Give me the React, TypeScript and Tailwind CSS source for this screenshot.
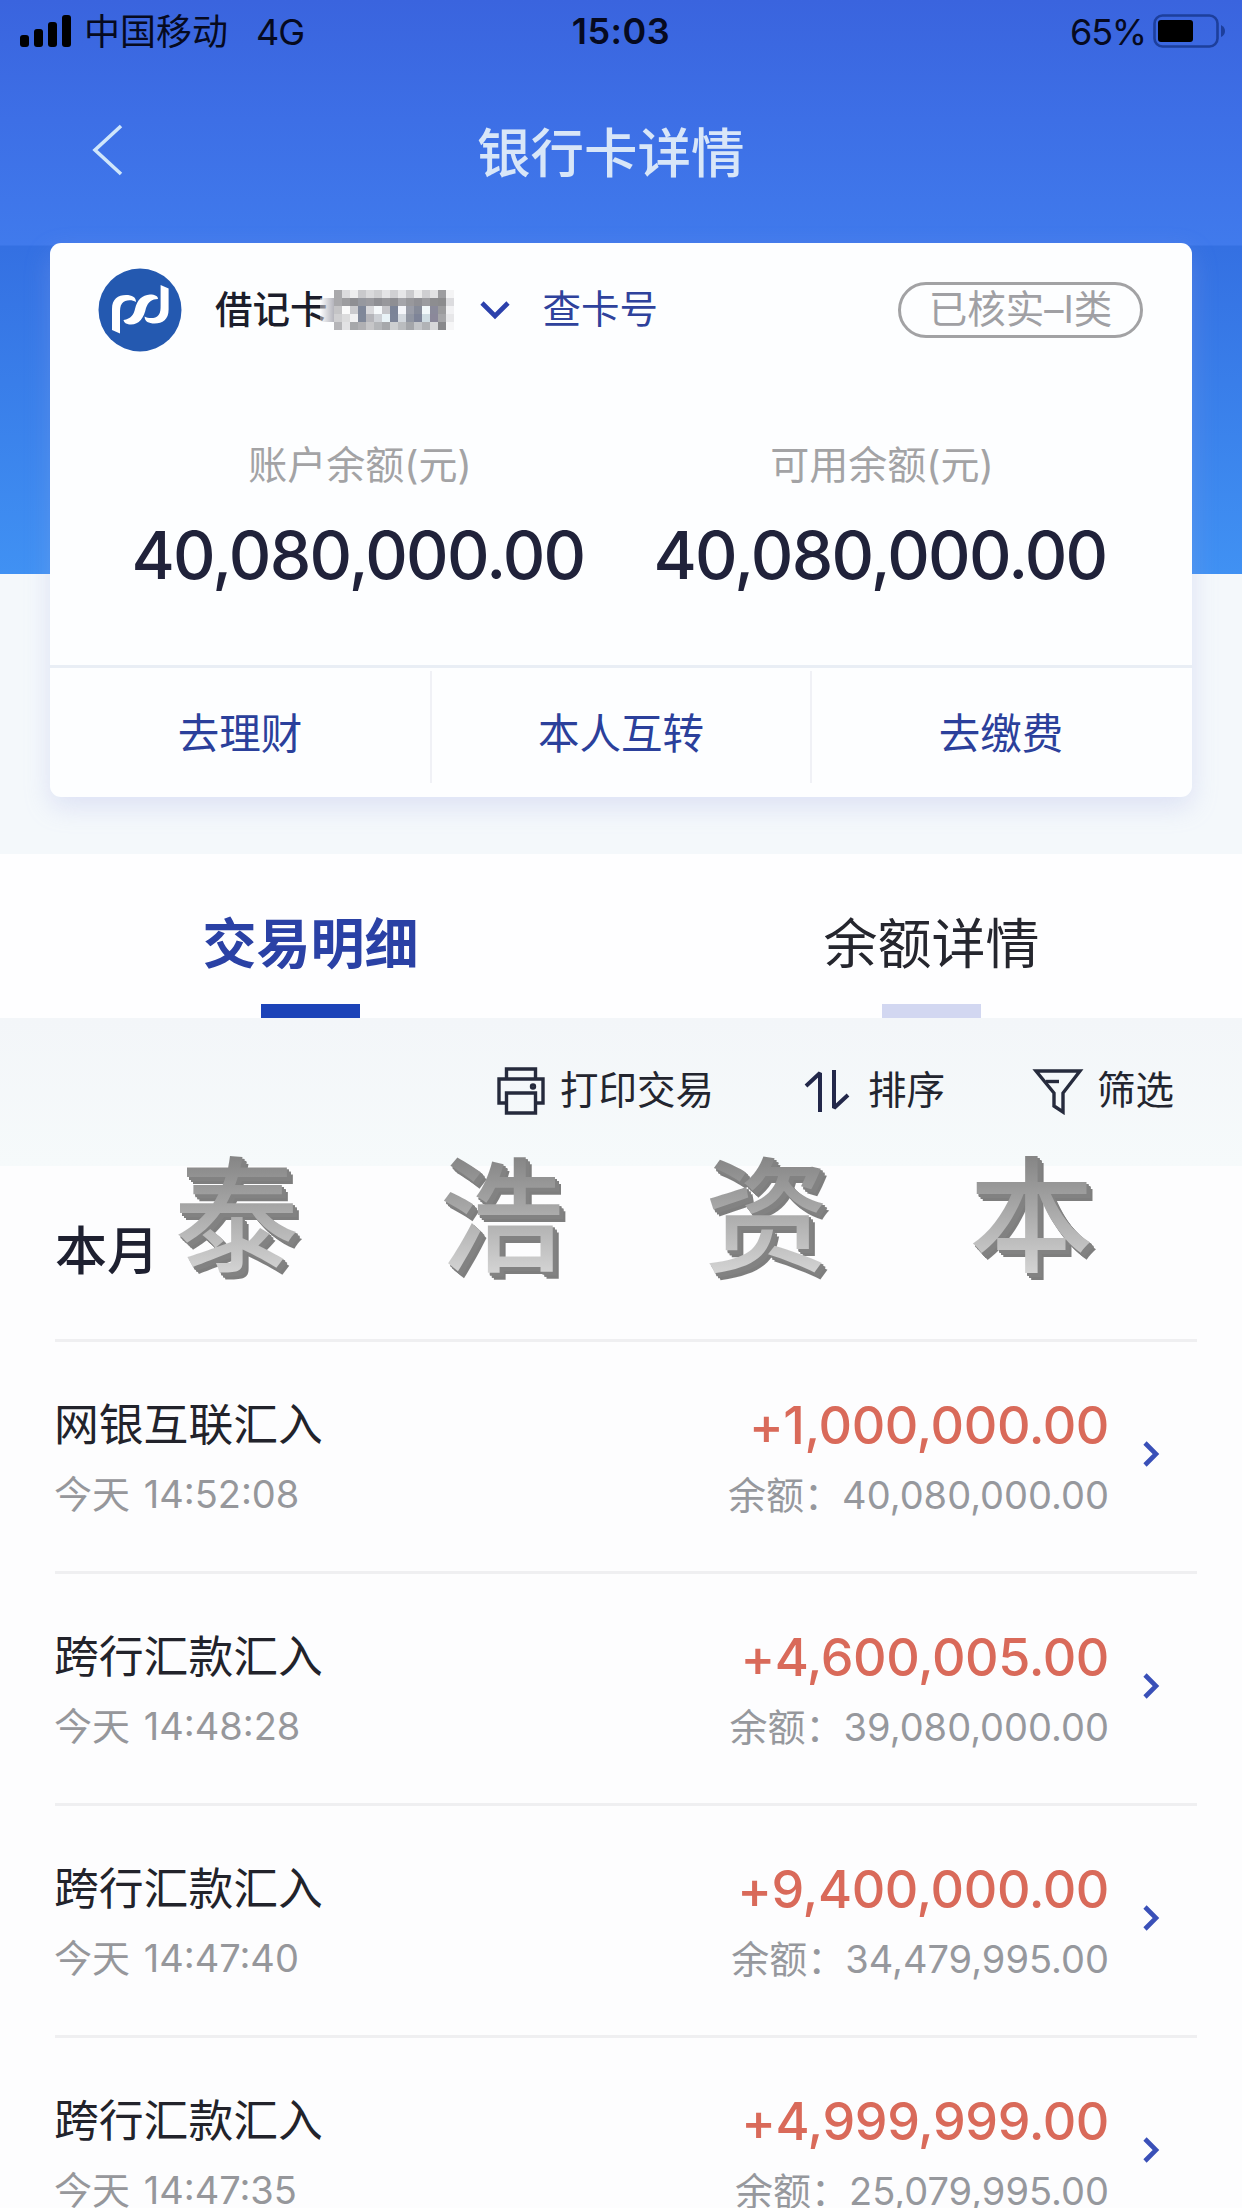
import React from 'react'

interface Transaction {
  title: string
  time: string
  amount: string
  balance: string
}

const transactions: Transaction[] = [
  { title: '网银互联汇入', time: '今天 14:52:08', amount: '+1,000,000.00', balance: '40,080,000.00' },
  { title: '跨行汇款汇入', time: '今天 14:48:28', amount: '+4,600,005.00', balance: '39,080,000.00' },
  { title: '跨行汇款汇入', time: '今天 14:47:40', amount: '+9,400,000.00', balance: '34,479,995.00' },
  { title: '跨行汇款汇入', time: '今天 14:47:35', amount: '+4,999,999.00', balance: '25,079,995.00' },
]

const balances = [
  { label: '账户余额(元)', value: '40,080,000.00' },
  { label: '可用余额(元)', value: '40,080,000.00' },
]

const actions = ['去理财', '本人互转', '去缴费']

// 8px cells that hide the card number
const maskRows = [
  ['#a9a9ac', '#dcdcde', '#eeeeef', '#c9c9cc', '#dadadc', '#cfcfd1', '#e4e4e6', '#d0d0d3', '#e6e6e8', '#cacacd', '#ebebec', '#cfcfd2', '#e2e2e4', '#9d9da0', '#f4f4f5'],
  ['#a9a9ac', '#9d9da0', '#8f8f93', '#96989f', '#9b9ba0', '#8f8f94', '#98989c', '#8e8e93', '#a5a5aa', '#98989c', '#909095', '#9c9ca0', '#8d8d90', '#8b8b8d', '#dcdcdf'],
  ['#c4c4c6', '#fbfbfb', '#cbcbce', '#7f8799', '#d9d9dc', '#f6f9fb', '#c6c6ca', '#7b8397', '#f5f6fa', '#9a9da8', '#868b99', '#f2f8fa', '#8a8a9a', '#9b9b9d', '#f1f1f3'],
  ['#cfcfd1', '#dcdcdd', '#f1f1f2', '#808899', '#b5b5ba', '#cdd0d5', '#e9f3f7', '#7c8498', '#d3d8de', '#9196a2', '#7e8498', '#cfdce2', '#8b889a', '#a5a5a8', '#e7e7e9'],
  ['#b5b5b8', '#e2e2e4', '#a6a7aa', '#b0b0b3', '#c6c6c8', '#b4b6b9', '#a6a8ab', '#cdcfd1', '#babcbf', '#a4a6aa', '#c3c5c8', '#b1b3b6', '#d8d8da', '#88888b', '#f6f6f7'],
]

function StatusBar() {
  return (
    <div className="flex h-[62px] items-center justify-between pl-[20px] pr-[17px] text-[36px] text-[#060a20]">
      <div className="flex flex-1 items-center">
        <div className="flex h-[32px] items-end gap-[5px]">
          <span className="h-[12px] w-[9px] rounded-[3px] bg-black" />
          <span className="h-[18px] w-[9px] rounded-[3px] bg-black" />
          <span className="h-[25px] w-[9px] rounded-[3px] bg-black" />
          <span className="h-[32px] w-[9px] rounded-[3px] bg-black" />
        </div>
        <span className="ml-[13px] pt-px">中国移动</span>
        <span className="ml-[28px] pt-px tracking-[-1px]">4G</span>
      </div>
      <span className="mr-[3px] font-semibold tracking-[0.5px]">15:03</span>
      <div className="flex flex-1 items-center justify-end">
        <span className="mr-[7px] pt-px tracking-[-1.2px]">65%</span>
        <svg width="72" height="34" viewBox="0 0 72 34" fill="none">
          <rect x="1.5" y="1.5" width="63" height="31" rx="8" stroke="#1d3f9c" strokeWidth="2.6" />
          <rect x="5" y="6" width="35" height="22" rx="3" fill="#000" />
          <path d="M68 11q4 2 4 6t-4 6z" fill="#1d3f9c" />
        </svg>
      </div>
    </div>
  )
}

function NavBar() {
  return (
    <div className="flex h-[183px] items-center pl-[92px]">
      <svg width="32" height="54" viewBox="0 0 32 54" fill="none" className="-mt-[8px]">
        <path d="M29 3L3 27l26 24" stroke="#cfe6fb" strokeWidth="3.6" />
      </svg>
      <h1 className="ml-[353px] text-[53.5px] leading-none font-medium text-[#d8e6f8]">银行卡详情</h1>
    </div>
  )
}

function BankLogo() {
  return (
    <svg width="84" height="84" viewBox="0 0 84 84">
      <circle cx="42" cy="42" r="41.5" fill="#2459b0" />
      <g fill="#fff">
        <path d="M14 62V41C14 31 20 27 28 27C34 27 38 29 38 34C34 31.5 27 31.500 24 35.500C22 38 22 42 22 45V65.500Z" />
        <path d="M14 62V41C14 31 20 27 28 27C34 27 38 29 38 34C34 31.5 27 31.500 24 35.500C22 38 22 42 22 45V65.500Z" transform="rotate(180 42.3 41.2)" />
        <path d="M25.500 52C33 51 36 46 37 41C39 32 44 27 52 26.500C57 26.500 60 28 60 31C54 31 50 34 48 40C46 50 41 56.500 33 56.500C29 56.500 26 55 25.500 52Z" />
      </g>
    </svg>
  )
}

function AccountCard() {
  return (
    <section className="mx-[50px] h-[554px] rounded-[11px] bg-[#fdfeff] shadow-[0_10px_26px_rgba(160,170,230,0.28)]">
      <div className="flex h-[132px] items-center pt-[2px] pl-[48px] pr-[49px]">
        <BankLogo />
        <span className="ml-[33px] text-[37.500px] font-medium text-[#1c1e2c]">借记卡</span>
        <div className="relative -ml-[6px] h-[40px] w-[132px]">
          <div className="absolute top-[8px] left-[-2px] h-[24px] w-[14px] bg-linear-to-r from-white/40 to-[#b4b4bc]" />
          <div className="absolute top-0 right-0 grid grid-cols-[repeat(15,8px)]">
            {maskRows.flat().map((color, i) => (
              <span key={i} className="h-[8px]" style={{ backgroundColor: color }} />
            ))}
          </div>
        </div>
        <svg width="32" height="22" viewBox="0 0 32 22" fill="none" className="ml-[25px]">
          <path d="M3 4l13 13L29 4" stroke="#2c41ac" strokeWidth="4.600" />
        </svg>
        <span className="ml-[32px] text-[38.500px] text-[#2f429c]">查卡号</span>
        <span className="ml-auto flex h-[56px] w-[245px] items-center justify-center rounded-full border-[3px] border-[#a2a2a4] text-[38.500px] text-[#a0a0a4]">
          已核实–I类
        </span>
      </div>

      <div className="grid h-[290px] grid-cols-2 px-[49px] pt-[60px] text-center">
        {balances.map(item => (
          <div key={item.label}>
            <div className="text-[39px] leading-[60px] text-[#a3a3a5]">{item.label}</div>
            <div className="mt-[20px] pr-[4px] text-[66px] leading-[80px] font-medium tracking-[-1.700px] text-[#20223a]">{item.value}</div>
          </div>
        ))}
      </div>

      <div className="grid h-[130px] grid-cols-3 border-t-[3px] border-[#e9eef5] pt-[3px] pr-[2px]">
        {actions.map((label, i) => (
          <div
            key={label}
            className={
              'flex h-[112px] items-center justify-center pt-[14px] text-[41.500px] text-[#2b409b]' +
              (i > 0 ? ' border-l-2 border-[#f0f1f6]' : '')
            }
          >
            {label}
          </div>
        ))}
      </div>
    </section>
  )
}

function Tabs() {
  return (
    <div className="grid h-[164px] grid-cols-2 bg-[#fefeff] text-[54px]">
      <div className="flex flex-col items-center justify-between pt-[51px]">
        <span className="leading-[80px] font-bold text-[#2a41a5]">交易明细</span>
        <span className="h-[14px] w-[99px] bg-[#1c43b8]" />
      </div>
      <div className="flex flex-col items-center justify-between pt-[51px]">
        <span className="leading-[80px] text-[#25262e]">余额详情</span>
        <span className="h-[14px] w-[99px] bg-[#d2d7f1]" />
      </div>
    </div>
  )
}

function Toolbar() {
  return (
    <div className="flex h-[148px] items-center bg-linear-to-b from-[#f3f6f9] to-[#f6fafb] pr-[68px] pb-[3px] text-[38.500px] text-[#23252f]">
      <div className="ml-auto flex items-center">
        <svg width="48" height="48" viewBox="0 0 48 48" fill="none" stroke="#252a3c" strokeWidth="3.400">
          <path d="M9.500 11V2H38.500V11M9.500 36H2V12H46V36H38.500" />
          <path d="M9.500 26H38.500V46H9.500z" />
          <circle cx="36" cy="19.500" r="1.500" />
        </svg>
        <span className="ml-[15px]">打印交易</span>
      </div>
      <div className="ml-[90px] flex items-center">
        <svg width="48" height="44" viewBox="0 0 48 44" fill="none" stroke="#23284a" strokeWidth="4">
          <path d="M2 17L16 4V43M30 1V39L44 26" strokeLinejoin="bevel" />
        </svg>
        <span className="ml-[16px]">排序</span>
      </div>
      <div className="ml-[87px] flex items-center">
        <svg width="52" height="48" viewBox="0 0 52 48" fill="none" stroke="#262b3d" strokeWidth="3.400">
          <path d="M4 4H48L31 26V45L22 39V26z" />
          <path d="M14 14.500H27" />
        </svg>
        <span className="ml-[13px]">筛选</span>
      </div>
    </div>
  )
}

function Watermark() {
  return (
    <div className="absolute top-[1132px] left-[174px] flex gap-[140px] text-[125px] leading-[170px] font-medium [filter:drop-shadow(2px_2px_0_#828282)_drop-shadow(2px_2px_0_#828282)_drop-shadow(2px_3px_0_#7e7e7e)]">
      {['泰', '浩', '资', '本'].map(char => (
        <span key={char} className="bg-linear-to-b from-[#868686] from-15% to-[#dcdcdc] to-90% bg-clip-text text-transparent">
          {char}
        </span>
      ))}
    </div>
  )
}

function TransactionRow({ item }: { item: Transaction }) {
  return (
    <li className="flex h-[232px] border-t-[3px] border-[#efeff1] pt-[51px]">
      <div className="-ml-px">
        <div className="text-[44.800px] leading-[64px] text-[#22232b]">{item.title}</div>
        <div className="mt-[7px] text-[38px] leading-[60px] [word-spacing:3px] text-[#96979b]">{item.time}</div>
      </div>
      <div className="ml-auto text-right">
        <div className="pt-px text-[52px] leading-[64px] font-medium tracking-[-0.400px] text-[#d96a5a]">{item.amount}</div>
        <div className="mt-[7px] text-[38px] leading-[60px] text-[#96989d]">余额：{item.balance}</div>
      </div>
      <svg width="20" height="30" viewBox="0 0 20 30" fill="none" className="mt-[46px] mr-[35px] ml-[33px]">
        <path d="M3 4l11 11L3 26" stroke="#3a50b8" strokeWidth="4.600" />
      </svg>
    </li>
  )
}

export default function App() {
  return (
    <div className="relative h-[2208px] w-[1242px] overflow-hidden bg-[#fdfdfe] font-['Inter','Noto_Sans_CJK_SC',sans-serif]">
      <div className="h-[854px] bg-[linear-gradient(to_bottom,#3a64de_0,#3d6fe6_120px,#407aec_245px,#3470e2_246px,#4091f3_574px,#f4f8fb_574px)]">
        <StatusBar />
        <NavBar />
        <div className="-mt-[2px]">
          <AccountCard />
        </div>
      </div>

      <Tabs />
      <Toolbar />

      <div className="pl-[55px] pr-[45px]">
        <h2 className="h-[173px] pt-[50px] text-[52px] leading-[72px] font-medium text-[#1e2030]">本月</h2>
        <ul>
          {transactions.map(item => (
            <TransactionRow key={item.time} item={item} />
          ))}
        </ul>
      </div>

      <Watermark />
    </div>
  )
}
